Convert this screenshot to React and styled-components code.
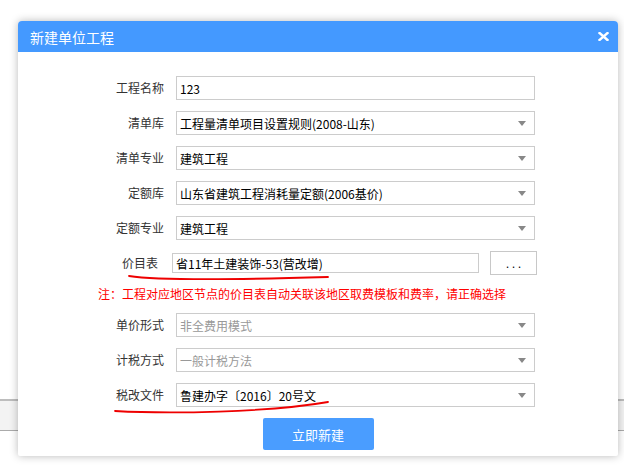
import styled, { createGlobalStyle } from 'styled-components';

const GlobalStyle = createGlobalStyle`
	html, body {
		margin: 0;
		padding: 0;
		background: #fff;
	}
	body {
		font-family: "Noto Sans CJK SC", "Noto Sans", sans-serif;
		font-size: 12px;
		color: #333;
	}
	* {
		box-sizing: border-box;
	}
`;

const Page = styled.div`
	position: relative;
	width: 624px;
	height: 472px;
	overflow: hidden;
	padding-top: 399px;
`;

const BackBar = styled.div`
	height: 32px;
	background: #f3f3f3;
	border-top: 2px solid #bdbdbd;
	border-bottom: 1px solid #ababab;
`;

const Modal = styled.div`
	position: absolute;
	top: 21px;
	left: 18px;
	width: 600px;
	height: 435px;
	background: #fff;
	border-radius: 4px 4px 2px 2px;
	box-shadow: 0 0 8px rgba(0, 0, 0, 0.28);
	display: flex;
	flex-direction: column;
`;

const Header = styled.div`
	height: 31px;
	flex-shrink: 0;
	background: #4499ff;
	border-radius: 4px 4px 0 0;
	display: flex;
	align-items: center;
	justify-content: space-between;
	padding: 0 9px 0 12px;
`;

const Title = styled.div`
	color: #fff;
	font-size: 14px;
	line-height: 1;
`;

const CloseButton = styled.div`
	width: 11px;
	height: 9px;
	display: flex;
	cursor: pointer;
`;

const Body = styled.div`
	position: relative;
	flex: 1;
	display: flex;
	flex-direction: column;
	gap: 11px;
	padding: 24px 0 0 66px;
`;

const Row = styled.div`
	display: grid;
	grid-template-columns: 80px 359px;
	column-gap: 12px;
	align-items: center;
	height: 24px;
`;

const PriceRow = styled.div`
	display: flex;
	align-items: center;
	height: 24px;
`;

const Label = styled.div`
	width: ${props => props.width || 'auto'};
	flex-shrink: 0;
	text-align: right;
	color: #333;
	font-size: 12px;
	line-height: 24px;
	white-space: nowrap;
`;

const Field = styled.div`
	position: relative;
	height: ${props => (props.short ? '20px' : '24px')};
	border: 1px solid #cccccc;
	background: #fff;
	display: flex;
	align-items: center;
	padding: 0 20px 0 3px;
	font-size: 12px;
	color: ${props => (props.disabled ? '#999' : '#000')};
	white-space: nowrap;
	overflow: hidden;
`;

const PriceField = styled(Field)`
	width: 307px;
	margin-left: 14px;
	flex-shrink: 0;
`;

const Arrow = styled.span`
	position: absolute;
	right: 8px;
	top: 50%;
	margin-top: -2px;
	width: 0;
	height: 0;
	border-left: 4px solid transparent;
	border-right: 4px solid transparent;
	border-top: 5px solid #888;
`;

const DotsButton = styled.div`
	width: 47px;
	height: 24px;
	margin-left: 11px;
	flex-shrink: 0;
	border: 1px solid #c8c8c8;
	background: #fff;
	display: flex;
	align-items: center;
	justify-content: center;
	font-size: 11px;
	color: #000;
	letter-spacing: 3px;
	padding-left: 3px;
	cursor: pointer;
`;

const Note = styled.div`
	height: 16px;
	line-height: 16px;
	padding-left: 14px;
	color: #ff0000;
	font-size: 12px;
	white-space: nowrap;
`;

const Footer = styled.div`
	display: flex;
	justify-content: center;
	margin-left: -66px;
`;

const SubmitButton = styled.button`
	width: 111px;
	height: 32px;
	border: none;
	border-radius: 2px;
	background: #4a9dff;
	color: #fff;
	font-family: inherit;
	font-size: 13px;
	cursor: pointer;
`;

const Marks = styled.svg`
	position: absolute;
	left: 0;
	top: 0;
	pointer-events: none;
`;

const rows = [
	{ label: '工程名称', value: '123', input: true },
	{ label: '清单库', value: '工程量清单项目设置规则(2008-山东)' },
	{ label: '清单专业', value: '建筑工程' },
	{ label: '定额库', value: '山东省建筑工程消耗量定额(2006基价)' },
	{ label: '定额专业', value: '建筑工程' },
];

const lowerRows = [
	{ label: '单价形式', value: '非全费用模式', disabled: true },
	{ label: '计税方式', value: '一般计税方法', disabled: true },
	{ label: '税改文件', value: '鲁建办字〔2016〕20号文' },
];

const FormRow = ({ label, value, input, disabled }) => (
	<Row>
		<Label>{label}</Label>
		<Field disabled={disabled}>
			{value}
			{!input && <Arrow />}
		</Field>
	</Row>
);

const App = () => (
	<>
		<GlobalStyle />
		<Page>
			<BackBar />
			<Modal>
				<Header>
					<Title>新建单位工程</Title>
					<CloseButton>
						<svg width="11" height="9" viewBox="0 0 11 9">
							<path d="M1.5 1 L9.5 8 M9.5 1 L1.5 8" stroke="#fff" strokeWidth="2.4" strokeLinecap="square" />
						</svg>
					</CloseButton>
				</Header>
				<Body>
					{rows.map(row => (
						<FormRow key={row.label} {...row} />
					))}
					<PriceRow>
						<Label width="74px">价目表</Label>
						<PriceField short>省11年土建装饰-53(营改增)</PriceField>
						<DotsButton>...</DotsButton>
					</PriceRow>
					<Note>注：工程对应地区节点的价目表自动关联该地区取费模板和费率，请正确选择</Note>
					{lowerRows.map(row => (
						<FormRow key={row.label} {...row} />
					))}
					<Footer>
						<SubmitButton>立即新建</SubmitButton>
					</Footer>
					<Marks width="600" height="404" viewBox="0 31 600 404">
						<path
							d="M111 255 C 140 259.5, 210 259, 310 256"
							fill="none"
							stroke="#ee0000"
							strokeWidth="1.8"
							strokeLinecap="round"
						/>
						<path
							d="M97 390 C 150 393, 250 391.5, 310 381"
							fill="none"
							stroke="#ee0000"
							strokeWidth="1.8"
							strokeLinecap="round"
						/>
					</Marks>
				</Body>
			</Modal>
		</Page>
	</>
);

export default App;
